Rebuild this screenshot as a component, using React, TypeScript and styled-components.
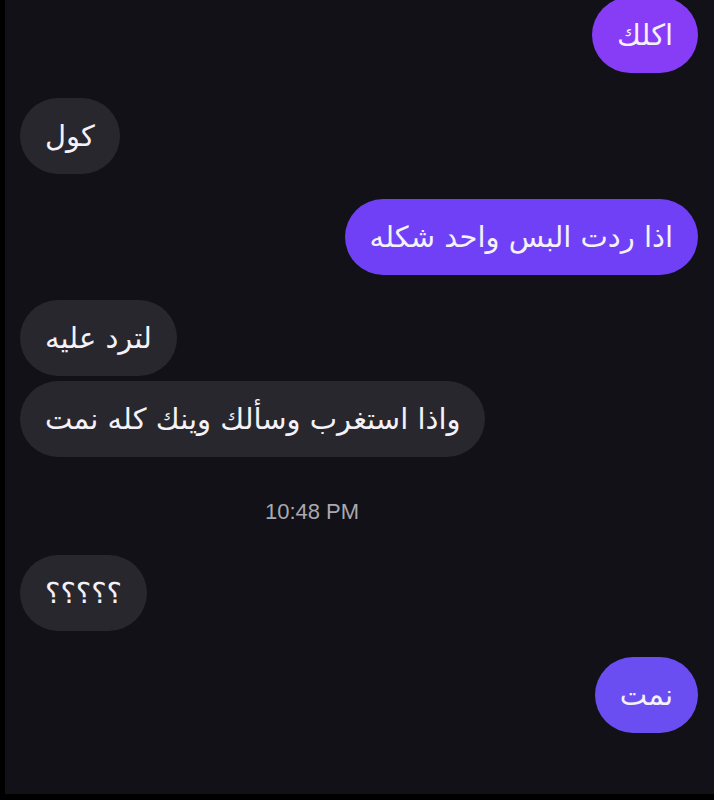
import { FC } from 'react';
import styled, { createGlobalStyle } from 'styled-components';

const GlobalStyle = createGlobalStyle`
    html, body {
        margin: 0;
        padding: 0;
        background: #000;
    }
    #root {
        width: 714px;
        height: 800px;
        overflow: hidden;
    }
`;

const Screen = styled.div`
    margin-left: 5px;
    height: 794px;
    background: #111117;
    padding: 0 16px 0 15px;
    box-sizing: border-box;
    display: flex;
    flex-direction: column;
    overflow: hidden;
`;

const Thread = styled.div`
    display: flex;
    flex-direction: column;
    margin-top: -3px;
`;

const Row = styled.div<{ $mine?: boolean; $gap: number }>`
    display: flex;
    justify-content: ${(p) => (p.$mine ? 'flex-end' : 'flex-start')};
    margin-top: ${(p) => p.$gap}px;
`;

const Bubble = styled.div<{ $mine?: boolean; $tone?: string }>`
    direction: rtl;
    height: 76px;
    box-sizing: border-box;
    padding: 0 25px;
    display: inline-flex;
    align-items: center;
    border-radius: 38px;
    background: ${(p) => (p.$mine ? p.$tone || '#7a3ff5' : '#27272d')};
    color: #f4f2f8;
    font-family: "DejaVu Sans", "Noto Sans", sans-serif;
    font-size: 29px;
    white-space: nowrap;
`;

const Stamp = styled.div`
    margin-top: 42px;
    padding-right: 94px;
    text-align: center;
    font-family: "Liberation Sans", Arial, sans-serif;
    font-size: 22px;
    line-height: 26px;
    color: #a9a9ae;
`;

interface IMessage {
    text: string;
    mine?: boolean;
    gap: number;
    tone?: string;
}

const before: IMessage[] = [
    { text: 'اكلك', mine: true, gap: 0, tone: '#873cf6' },
    { text: 'كول', gap: 25 },
    { text: 'اذا ردت البس واحد شكله', mine: true, gap: 25, tone: '#6f40f5' },
    { text: 'لترد عليه', gap: 25 },
    { text: 'واذا استغرب وسألك وينك كله نمت', gap: 5 },
];

const after: IMessage[] = [
    { text: '؟؟؟؟؟', gap: 30 },
    { text: 'نمت', mine: true, gap: 26, tone: '#6a4ef2' },
];

const Messages: FC<{ items: IMessage[] }> = ({ items }) => (
    <>
        {items.map((m, i) => (
            <Row key={i} $mine={m.mine} $gap={m.gap}>
                <Bubble $mine={m.mine} $tone={m.tone}>{m.text}</Bubble>
            </Row>
        ))}
    </>
);

export default function App() {
    return (
        <>
            <GlobalStyle />
            <Screen>
                <Thread>
                    <Messages items={before} />
                    <Stamp>10:48 PM</Stamp>
                    <Messages items={after} />
                </Thread>
            </Screen>
        </>
    );
}
